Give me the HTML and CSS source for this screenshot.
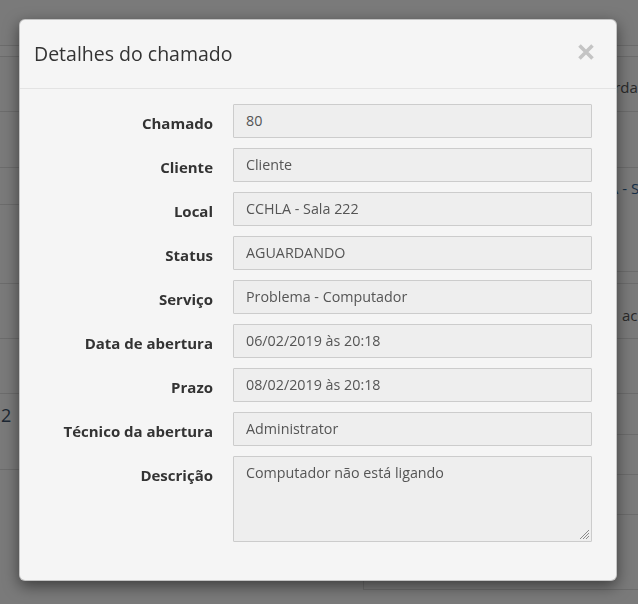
FILE: index.html
```html
<!DOCTYPE html>
<html lang="pt-BR">
<head>
<meta charset="utf-8">
<title>Detalhes do chamado</title>
<link rel="stylesheet" href="styles.css">
</head>
<body>
<div class="page">
  <div class="col col-left">
    <div class="trow r-top"></div>
    <div class="trow r-11"></div>
    <div class="trow r-55"></div>
    <div class="trow r-56"></div>
    <div class="trow r-37"></div>
    <div class="trow r-79"></div>
    <div class="trow r-55"></div>
    <div class="trow r-55"></div>
    <div class="trow r-76"><span class="cell-num">2</span></div>
    <div class="trow r-rest"></div>
  </div>
  <div class="col col-right">
    <div class="trow r-top"></div>
    <div class="trow r-11"></div>
    <div class="trow r-55"><span class="cell-txt t-dar">Aguardando</span></div>
    <div class="trow r-56"></div>
    <div class="trow r-104"><span class="cell-txt t-link">CCHLA - Sala 222</span></div>
    <div class="trow r-12"></div>
    <div class="trow r-55"><span class="cell-txt t-ac">acompanhar</span></div>
    <div class="trow r-55"></div>
    <div class="trow r-41"></div>
    <div class="trow r-40"></div>
    <div class="trow r-40"></div>
    <div class="trow r-75 boxed"></div>
    <div class="trow r-rest"></div>
  </div>
</div>

<div class="backdrop"></div>

<div class="modal">
  <div class="modal-header">
    <h4 class="modal-title">Detalhes do chamado</h4>
    <button class="close" type="button" aria-label="Fechar">
      <svg width="16" height="16" viewBox="0 0 16 16"><path d="M1.5 1.5 L14.5 14.5 M14.5 1.5 L1.5 14.5" stroke="#c4c4c4" stroke-width="3.6" fill="none"/></svg>
    </button>
  </div>
  <div class="modal-body">
    <div class="form-grid">
      <div class="lbl">Chamado</div><div class="field">80</div>
      <div class="lbl">Cliente</div><div class="field">Cliente</div>
      <div class="lbl">Local</div><div class="field">CCHLA - Sala 222</div>
      <div class="lbl">Status</div><div class="field">AGUARDANDO</div>
      <div class="lbl">Serviço</div><div class="field">Problema - Computador</div>
      <div class="lbl">Data de abertura</div><div class="field">06/02/2019 às 20:18</div>
      <div class="lbl">Prazo</div><div class="field">08/02/2019 às 20:18</div>
      <div class="lbl">Técnico da abertura</div><div class="field">Administrator</div>
      <div class="lbl">Descrição</div>
      <div class="field area">Computador não está ligando
        <svg class="grip" width="11" height="11" viewBox="0 0 11 11"><path d="M10 1 L1 10 M10 4 L4 10 M10 7 L7 10" stroke="#8a8a8a" stroke-width="1" fill="none"/></svg>
      </div>
    </div>
  </div>
</div>
</body>
</html>
```

FILE: styles.css
```css
html, body {
  margin: 0;
  padding: 0;
}
body {
  background: #f4f4f4;
  font-family: "Open Sans", "Noto Sans", "Liberation Sans", sans-serif;
  font-size: 14px;
  line-height: 20px;
  color: #333;
  width: 638px;
  height: 604px;
  overflow: hidden;
}

/* background page (table behind the dialog) */
.page {
  display: flex;
  height: 604px;
  overflow: hidden;
}
.col {
  display: flex;
  flex-direction: column;
  min-width: 0;
}
.col-left { width: 363px; flex: none; }
.col-right { flex: 1; }
.trow {
  flex: none;
  border-top: 1px solid #d8d8d8;
  box-sizing: border-box;
  display: flex;
  align-items: center;
  overflow: hidden;
  white-space: nowrap;
}
.r-top { height: 45px; border-top: none; }
.r-11 { height: 11px; background: #f8f8f8; }
.r-12 { height: 12px; }
.r-37 { height: 37px; }
.r-40 { height: 40px; }
.r-41 { height: 41px; }
.r-55 { height: 55px; }
.r-56 { height: 56px; }
.r-75 { height: 75px; }
.r-76 { height: 76px; }
.r-79 { height: 79px; }
.r-104 { height: 104px; align-items: flex-start; }
.r-rest { flex: 1; min-height: 0; }
.boxed { border-left: 1px solid #d8d8d8; }
.cell-num {
  flex: none;
  padding-left: 1px;
  font-size: 18px;
  color: #3b4f66;
  margin-top: -34px;
}
.cell-txt { flex: none; font-size: 15px; color: #555; }
.t-dar { padding-left: 216px; margin-top: 6px; }
.t-link { padding-left: 208px; padding-top: 10px; color: #2f5f8e; }
.t-ac { padding-left: 259px; margin-top: 8px; }

.backdrop {
  position: fixed;
  inset: 0;
  background: rgba(0, 0, 0, 0.5);
}

/* dialog */
.modal {
  position: absolute;
  top: 19px;
  left: 19px;
  width: 598px;
  box-sizing: border-box;
  background: #f5f5f5;
  border: 1px solid rgba(0, 0, 0, 0.2);
  border-radius: 6px;
  box-shadow: 0 5px 15px rgba(0, 0, 0, 0.5);
}
.modal-header {
  height: 69px;
  box-sizing: border-box;
  padding: 20px 21px 21px 14px;
  border-bottom: 1px solid #e3e3e3;
  display: flex;
  justify-content: space-between;
  align-items: flex-start;
}
.modal-title {
  margin: 0;
  font-size: 19.5px;
  line-height: 27px;
  font-weight: 400;
  color: #333;
}
.close {
  margin: 4px 1px 0 0;
  padding: 0;
  border: 0;
  background: none;
  width: 16px;
  height: 16px;
  display: block;
}
.close svg { display: block; }

.modal-body {
  padding: 15px 24px 38px 15px;
}
.form-grid {
  display: grid;
  grid-template-columns: 178px 359px;
  column-gap: 20px;
  row-gap: 10px;
}
.lbl {
  text-align: right;
  font-weight: 700;
  font-size: 15px;
  color: #333;
  padding-top: 8.5px;
  white-space: nowrap;
}
.field {
  position: relative;
  height: 34px;
  box-sizing: border-box;
  padding: 6px 12px;
  background: #eeeeee;
  border: 1px solid #cccccc;
  border-radius: 1px;
  color: #555;
  font-size: 14.3px;
  white-space: nowrap;
}
.field.area {
  height: 86px;
  white-space: normal;
}
.grip {
  position: absolute;
  right: 1px;
  bottom: 1px;
}
```
